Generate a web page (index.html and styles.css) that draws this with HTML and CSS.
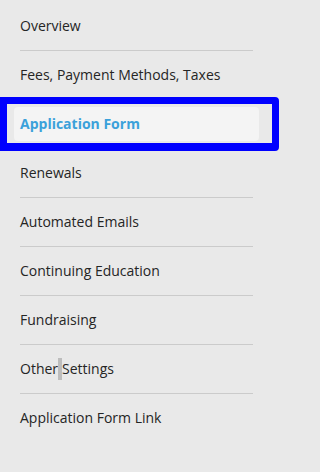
FILE: index.html
```html
<!DOCTYPE html>
<html>
<head>
<meta charset="utf-8">
<link rel="stylesheet" href="styles.css">
</head>
<body>
<nav class="menu">
  <ul class="menu-list">
    <li class="menu-item"><a class="menu-link">Overview</a></li>
    <li class="menu-item"><a class="menu-link">Fees, Payment Methods, Taxes</a></li>
    <li class="menu-item menu-item-active"><a class="menu-link menu-link-active">Application Form</a><span class="focus-ring"></span></li>
    <li class="menu-item"><a class="menu-link">Renewals</a></li>
    <li class="menu-item"><a class="menu-link">Automated Emails</a></li>
    <li class="menu-item"><a class="menu-link">Continuing Education</a></li>
    <li class="menu-item"><a class="menu-link">Fundraising</a></li>
    <li class="menu-item"><a class="menu-link">Other<span class="caret"></span>Settings</a></li>
    <li class="menu-item menu-item-last"><a class="menu-link">Application Form Link</a></li>
  </ul>
</nav>
</body>
</html>
```
FILE: styles.css
```css
html, body {
  margin: 0;
  padding: 0;
  background: #e9e9e9;
  font-family: "Open Sans", "Liberation Sans", sans-serif;
  font-size: 14px;
  color: #252525;
}
.menu {
  width: 289px;
  height: 472px;
}
.menu-list {
  list-style: none;
  margin: 0;
  padding: 2px 0 0 0;
}
.menu-item {
  position: relative;
  margin: 0 36px 0 20px;
  height: 48px;
  border-bottom: 1px solid #cbcbcb;
  display: flex;
  align-items: center;
}
.menu-item-last {
  border-bottom: none;
}
.menu-link {
  display: flex;
  align-items: center;
  line-height: 20px;
  white-space: nowrap;
}
.menu-link-active {
  margin: 0 -6px;
  padding: 0 6px;
  height: 34px;
  flex: 1;
  background: #f4f4f4;
  border-radius: 4px;
  color: #3ba1da;
  font-weight: 700;
}
.focus-ring {
  position: absolute;
  left: -20px;
  top: -3px;
  width: 265px;
  height: 39px;
  border: 7px solid #0000ff;
  border-bottom-width: 8px;
  border-radius: 0 4px 4px 0;
}
.caret {
  display: inline-block;
  width: 4px;
  height: 22px;
  background: #bdbdbd;
}
```
